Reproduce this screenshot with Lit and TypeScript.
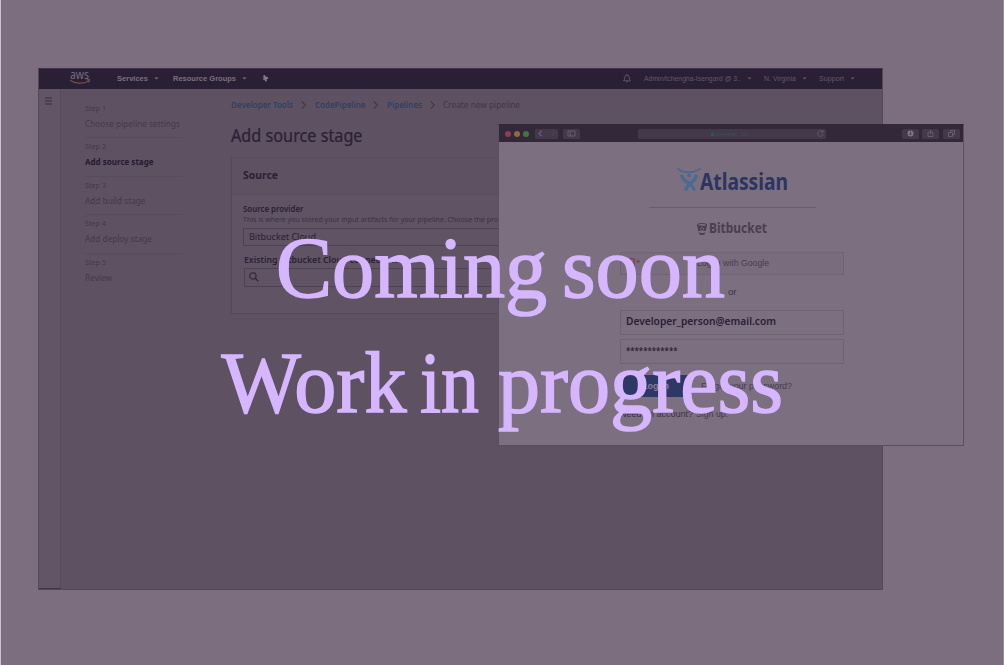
import { LitElement, html, svg, css } from "lit";
import { customElement } from "lit/decorators.js";

/** One line of text set to an exact measure. The box is `h` high with its baseline at 75%. */
const line = (text: string, w: number, size: number, cls = "", h = 12) => html`
  <svg class="line ${cls}" width=${w} height=${h} font-size=${size}>
    <text x="0" y=${h * 0.75} textLength=${w} lengthAdjust="spacingAndGlyphs">${text}</text>
  </svg>`;

const lineStyles = css`
  :host { display: block; box-sizing: border-box; font-family: "Noto Sans", "Open Sans", sans-serif; }
  *, *::before { box-sizing: border-box; }
  svg { display: block; flex: none; overflow: visible; }
  .line { fill: currentColor; }
  .bold { font-weight: 700; }
  .semi { font-weight: 600; }
  .arial { font-family: "Liberation Sans", Arial, sans-serif; }
`;

const caret = html`<svg class="caret" width="5" height="3" viewBox="0 0 5 3"><path d="M.5 .5h4L2.5 2.5z" fill="currentColor" /></svg>`;

@customElement("aws-header")
class AwsHeader extends LitElement {
  static styles = [lineStyles, css`
    :host { display: flex; height: 19.5px; background: #2a2035; color: #7a7083; padding: 2.5px 27px 0 30.5px; align-items: flex-start; }
    .left, .right { display: flex; align-items: center; height: 13px; }
    .right { margin-left: auto; color: #62576c; }
    .menu { display: flex; align-items: center; gap: 6px; }
    .services { margin-left: 27px; }
    .groups { margin-left: 14px; }
    .pin { margin-left: 15px; }
    .bell { margin-right: 13px; }
    .region { margin-left: 12px; }
    .support { margin-left: 12px; }
  `];
  render() {
    return html`
      <div class="left">
        <svg width="20" height="14" viewBox="0 0 20 14">
          <text x="0" y="8" font-size="12" textLength="19" lengthAdjust="spacingAndGlyphs" fill="#776b7e">aws</text>
          <path d="M0 9.200C5 12.700 13 13.200 18.300 10.200M16.800 8.800l2.700-.1-.7 2.800" fill="none" stroke="#775044" stroke-width="1.2" />
        </svg>
        <div class="menu services">${line("Services", 31, 7, "bold arial")}${caret}</div>
        <div class="menu groups">${line("Resource Groups", 63, 7, "bold arial")}${caret}</div>
        <svg class="pin" width="7" height="7" viewBox="0 0 7 7"><path d="M1.2.6 3 0l.8 1.7 2 .4.5 1.5-1.6.6L5 6 3.4 6.8 2.6 4.7.8 4.6 1.6 2.7z" fill="#82778a" /></svg>
      </div>
      <div class="right">
        <svg class="bell" width="8" height="9" viewBox="0 0 8 9"><path d="M.6 6.8C2.2 5.4 1.2 1 4 1s1.800 4.400 3.400 5.800zM3 7.700h2M4 0v1" fill="none" stroke="currentColor" stroke-width=".9" /></svg>
        <div class="menu">${line("Admin/tchengha-Isengard @ 3..", 97, 6.3, "arial")}${caret}</div>
        <div class="menu region">${line("N. Virginia", 32, 6.3, "arial")}${caret}</div>
        <div class="menu support">${line("Support", 25, 6.3, "arial")}${caret}</div>
      </div>`;
  }
}

@customElement("step-list")
class StepList extends LitElement {
  static styles = [lineStyles, css`
    :host { width: 98px; color: #463949; }
    .step { height: 38.4px; padding-top: 2px; border-bottom: 1px solid #594c5d; }
    .step:last-child { border: 0; }
    .name { padding-top: 4px; }
    .current { color: #251a30; }
  `];
  private steps: [string, number][] = [
    ["Choose pipeline settings", 95], ["Add source stage", 68.5], ["Add build stage", 60.5],
    ["Add deploy stage", 67], ["Review", 27],
  ];
  render() {
    return this.steps.map(([name, w], i) => html`
      <div class="step">
        ${line(`Step ${i + 1}`, 21, 7)}
        <div class="name ${i === 1 ? "current" : ""}">${line(name, w, 8, i === 1 ? "bold" : "")}</div>
      </div>`);
  }
}

@customElement("source-card")
class SourceCard extends LitElement {
  static styles = [lineStyles, css`
    :host { height: 157px; border: 1px solid #55485a; border-top-color: #5b4e5f; border-right: 0; color: #2b2036; background: #605364; }
    .head { height: 37px; padding: 12.5px 0 0 11px; border-bottom: 1px solid #594c5d; background: #5e5161; }
    .body { padding: 8px 0 0 11px; }
    .hint { color: #3c3046; height: 10px; margin-top: -2px; }
    .field { display: flex; align-items: center; height: 17.5px; border: 1px solid #4e4154; padding-left: 5px; }
    .provider { margin-top: 5.5px; }
    .label { padding: 8px 0 2.5px 1px; }
    .search { height: 18.5px; margin-left: 0.5px; padding-left: 4px; }
  `];
  render() {
    return html`
      <div class="head">${line("Source", 35, 11, "bold")}</div>
      <div class="body">
        ${line("Source provider", 60.5, 8.2, "semi")}
        <div class="hint">${line("This is where you stored your input artifacts for your pipeline. Choose the pro", 255, 7)}</div>
        <div class="field provider">${line("Bitbucket Cloud", 67, 9)}</div>
        <div class="label">${line("Existing Bitbucket Cloud connection", 153, 8.7, "semi")}</div>
        <div class="field search">
          <svg width="10" height="10" viewBox="0 0 10 10"><circle cx="3.9" cy="3.9" r="3.2" fill="none" stroke="#302438" stroke-width="1.1" /><path d="m6.2 6.2 3.2 3.2" stroke="#302438" stroke-width="1.2" /></svg>
        </div>
      </div>`;
  }
}

@customElement("pipeline-window")
class PipelineWindow extends LitElement {
  static styles = [lineStyles, css`
    :host { background: #5e5162; border: 1px solid #564859; border-top-color: #3f324a; display: flex; flex-direction: column; overflow: hidden; }
    .cols { display: flex; flex: 1; min-height: 0; }
    .rail { width: 21.5px; background: #625566; border-right: 1.5px solid #574a5b; border-bottom: 1.5px solid #40334a; padding: 8px 0 0 6px; }
    .steps { margin: 11.5px 48px 0 24.5px; }
    .main { flex: 1; min-width: 0; padding-top: 10.5px; }
    .crumbs { display: flex; align-items: center; color: #2d4169; }
    .crumbs .chev { margin: 0 8.3px; }
    .last { color: #42364b; }
    .title { padding: 13px 0 8.5px; color: #2b2036; stroke: #2b2036; stroke-width: 0.2px; }
  `];
  render() {
    const chev = html`<svg class="chev" width="5" height="8" viewBox="0 0 5 8"><path d="M.7.3 4.3 4 .7 7.7" fill="none" stroke="#42364b" stroke-width="1.100" /></svg>`;
    return html`
      <aws-header></aws-header>
      <div class="cols">
        <div class="rail"><svg width="7" height="8" viewBox="0 0 7 8"><path d="M0 1h7M0 4h7M0 7h7" stroke="#392d43" stroke-width="1.2" /></svg></div>
        <step-list class="steps"></step-list>
        <div class="main">
          <nav class="crumbs">
            ${line("Developer Tools", 62, 8, "semi")}${chev}${line("CodePipeline", 50.5, 8, "semi")}${chev}${line("Pipelines", 35, 8, "semi")}${chev}${line("Create new pipeline", 77, 8, "last")}
          </nav>
          <div class="title">${line("Add source stage", 131.5, 17.5, "", 24)}</div>
          <source-card></source-card>
        </div>
      </div>`;
  }
}

@customElement("safari-bar")
class SafariBar extends LitElement {
  static styles = [lineStyles, css`
    :host { display: flex; align-items: center; height: 16.5px; padding: 1px 3px 0 6px; background: #33273a; color: #6c6072; }
    .dot { width: 6px; height: 6px; border-radius: 50%; margin-right: 3.2px; }
    .red { background: #8d3f50; }
    .amber { background: #8d6b40; }
    .green { background: #477344; }
    .btn { display: flex; align-items: center; justify-content: center; width: 17px; height: 9.5px; border-radius: 1.5px; background: #44384b; margin-left: 3.6px; }
    .nav { width: 23px; justify-content: space-around; margin-left: 2.5px; margin-right: 1px; }
    .url { width: 187.5px; height: 9.5px; border-radius: 1.5px; background: #44384b; margin-left: 58.5px; display: flex; align-items: center; padding: 0 2px 0 73px; color: #275b59; }
    .reload { margin-left: auto; }
    .tools { display: flex; margin-left: auto; }
  `];
  render() {
    const glyph = (d: unknown) => html`<svg width="7" height="7" viewBox="0 0 7 7" fill="none" stroke="#6c6072" stroke-width=".9">${d}</svg>`;
    return html`
      <span class="dot red"></span><span class="dot amber"></span><span class="dot green"></span>
      <span class="btn nav">
        ${glyph(svg`<path d="M4.5.8 2 3.5l2.500 2.700" stroke="#8a7e90" />`)}
        ${glyph(svg`<path d="M2.5.8 5 3.5 2.5 6.2" stroke="#52465a" />`)}
      </span>
      <span class="btn">${glyph(svg`<path d="M0 1h7v5H0zM2.3 1v5" />`)}</span>
      <span class="url">
        <svg width="3" height="4" viewBox="0 0 3 4"><path d="M0 1.5h3V4H0zM.6 1.5V.3h1.800v1.200" fill="currentColor" /></svg>
        <svg width="37" height="6"><text x="1" y="4.7" font-size="4.8" textLength="35" fill="currentColor">Atlassian, Inc.</text></svg>
        <svg class="reload" width="7" height="7" viewBox="0 0 7 7"><path d="M5.8 2.2A2.7 2.7 0 1 0 6.2 4M4 2.2h2V.2" fill="none" stroke="#6c6072" stroke-width=".8" /></svg>
      </span>
      <span class="tools">
        <span class="btn">${glyph(svg`<circle cx="3.5" cy="3.5" r="3" fill="#83778a" stroke="none"/><path d="M3.5 1.700v3M2.200 3.700l1.300 1.300 1.300-1.300" stroke="#44384b" />`)}</span>
        <span class="btn">${glyph(svg`<path d="M2.4 2.5H1v4h5v-4H4.600M3.500 4.500V.4M2.300 1.500 3.500.3l1.200 1.200" />`)}</span>
        <span class="btn">${glyph(svg`<path d="M.5 2.5h4v4h-4zM2.500 2.500v-2h4v4h-2" />`)}</span>
      </span>`;
  }
}

@customElement("login-window")
class LoginWindow extends LitElement {
  static styles = [lineStyles, css`
    :host { background: #7c6f7f; border: 1px solid #5b4e60; border-top-color: #33273a; color: #3d3148; }
    .logo { display: flex; padding: 25px 0 0 178px; }
    .navy { color: #2b3560; }
    .rule { height: 1px; background: #6a5d6e; width: 167px; margin: 10.5px 0 0 149.5px; }
    .bit { display: flex; align-items: center; gap: 2px; padding: 13px 0 0 198px; color: #4b3e50; }
    .form { width: 224px; margin: 14.5px 0 0 121px; }
    .google { display: flex; align-items: center; height: 23.5px; border: 1px solid #716474; background: #796c7c; padding-left: 6px; }
    .google .line { margin-left: 57px; color: #493c50; }
    .plus { color: #823d50; }
    .or { padding: 10.5px 0 12px 107.5px; }
    .input { display: flex; align-items: center; height: 25px; border: 1px solid #706373; padding-left: 5px; margin-bottom: 4px; color: #2b2036; }
    .actions { display: flex; align-items: center; margin-top: 11px; gap: 9px; }
    .submit { width: 72px; height: 22px; border-radius: 2px; background: #2d3865; color: #8b7f95; padding: 5px 0 0 22px; }
    .link { color: #463b55; }
    .signup { display: flex; gap: 2.5px; padding-top: 11.5px; }
  `];
  render() {
    return html`
      <safari-bar></safari-bar>
      <div class="logo">
        <svg width="23" height="24" viewBox="0 0 23 24" fill="none" stroke="#496a92">
          <path d="M.3 1.500C7 6.500 17 6.500 24 1.200" stroke-width="1.7" />
          <circle cx="12" cy="8.3" r="2" fill="#496a92" stroke="none" />
          <path d="M4.5 7.800C5.500 16 14 14 17.500 23.500M19.500 7.800C18.500 16 11.500 14 8.500 23.500" stroke-width="3.2" />
        </svg>
        ${line("Atlassian", 88, 22.5, "bold navy", 30)}
      </div>
      <div class="rule"></div>
      <div class="bit">
        <svg width="10" height="12" viewBox="0 0 10 12"><path d="M0 1.800 1.300 8h7.400L10 1.800z" fill="currentColor" /><ellipse cx="5" cy="1.9" rx="4.5" ry="1.4" fill="#7c6f7f" stroke="currentColor" stroke-width="1.1" /><circle cx="5" cy="6.2" r="1.6" fill="#4b3e50" stroke="#7c6f7f" stroke-width=".8" /><path d="M1.700 9.200c2 1.200 4.600 1.200 6.600 0L7.700 11.300c-1.500.8-3.900.8-5.400 0z" fill="currentColor" /></svg>
        ${line("Bitbucket", 58, 14.2, "bold", 16)}
      </div>
      <div class="form">
        <div class="google">
          <svg class="plus" width="13" height="14"><text x="1" y="9" font-size="13" fill="currentColor">g</text><path d="M9 5.500h4M11 3.500v4" stroke="currentColor" /></svg>
          ${line("Log in with Google", 72, 8.7, "arial")}
        </div>
        <div class="or">${line("or", 8.5, 8.7, "arial")}</div>
        <div class="input">${line("Developer_person@email.com", 150, 10.3, "semi")}</div>
        <div class="input">${line("************", 51.5, 9, "semi", 9)}</div>
        <div class="actions">
          <div class="submit">${line("Log in", 27, 9, "bold arial")}</div>
          ${line("Forgot your password?", 91, 8.8, "link arial")}
        </div>
        <div class="signup">${line("Need an account?", 73, 8.8, "arial")}${line("Sign up.", 32, 8.8, "link arial")}</div>
      </div>`;
  }
}

@customElement("app-root")
class AppRoot extends LitElement {
  static styles = css`
    :host { display: block; position: relative; width: 1004px; height: 665px; overflow: hidden; box-sizing: border-box; background: #7c6e7e; border-left: 1px solid #c9c4ca; border-right: 1px solid #938896; }
    .pipeline { position: absolute; left: 37px; top: 68px; width: 845px; height: 521.5px; }
    .login { position: absolute; left: 497px; top: 124px; width: 466px; height: 322px; }
    .banner { position: absolute; left: -1px; top: 0; display: block; fill: #d6b6ff; stroke: #d6b6ff; stroke-width: 1.5px; font: 87px "Liberation Serif", "Times New Roman", serif; }
  `;
  private words: [string, number, number, number][] = [
    ["Coming", 276, 296.5, 271], ["soon", 562, 296.5, 163],
    ["Work", 221.5, 411.5, 185], ["in", 420, 411.5, 59], ["progress", 498, 411.5, 285],
  ];
  render() {
    return html`
      <pipeline-window class="pipeline"></pipeline-window>
      <login-window class="login"></login-window>
      <svg class="banner" width="1004" height="665">
        ${this.words.map(([word, x, y, w]) => svg`<text x=${x} y=${y} textLength=${w} lengthAdjust="spacingAndGlyphs">${word}</text>`)}
      </svg>`;
  }
}
